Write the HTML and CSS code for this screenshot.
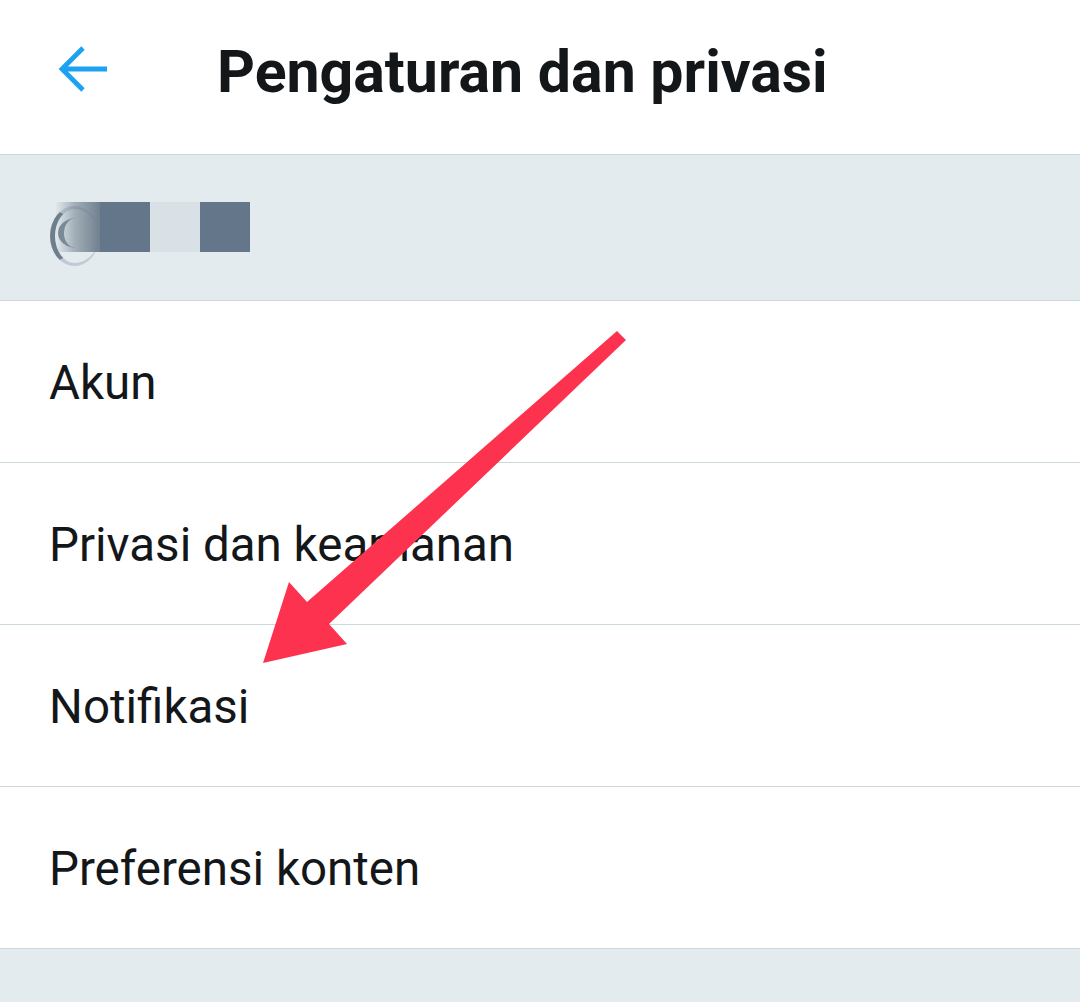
FILE: index.html
```html
<!DOCTYPE html>
<html lang="id">
<head>
    <meta charset="UTF-8">
    <meta name="viewport" content="width=device-width, initial-scale=1">
    <title>Pengaturan dan privasi</title>
    <link rel="stylesheet" href="styles.css">
</head>
<body>
<div class="screen">
    <div class="top_bar">
        <div class="back_button">
            <svg width="56" height="56" viewBox="0 0 56 56">
                <path d="M52 27 H7 M28 6 L7 27 L28 48" fill="none" stroke="#1da1f2" stroke-width="4.8"/>
            </svg>
        </div>
        <div class="top_title">Pengaturan dan privasi</div>
    </div>

    <div class="account_box">
        <div class="handle_blur">
            <div class="px px_fade"></div>
            <div class="px px_dark"></div>
            <div class="px px_light"></div>
            <div class="px px_dark"></div>
        </div>
    </div>

    <div class="menu_item">Akun</div>
    <div class="menu_item">Privasi dan keamanan</div>
    <div class="menu_item">Notifikasi</div>
    <div class="menu_item">Preferensi konten</div>

    <div class="bottom_fill"></div>

    <svg class="pointer_arrow" width="1080" height="1002" viewBox="0 0 1080 1002">
        <polygon points="617,331 626,340 329,624 347,644 263,663 289,582 307,602" fill="#fd324f"/>
    </svg>
</div>
</body>
</html>
```

FILE: styles.css
```css
* {
    box-sizing: border-box;
    font-family: Roboto, "Liberation Sans", sans-serif;
}

body {
    margin: 0;
    background: white;
    color: #14171a;
}

.screen {
    position: relative;
    width: 1080px;
    height: 1002px;
    display: flex;
    flex-direction: column;
    overflow: hidden;
}

.top_bar {
    height: 155px;
    display: flex;
    align-items: center;
    padding: 0 0 10px 55px;
    border-bottom: 1px solid #ccd6dd;
}

.back_button {
    width: 56px;
    height: 56px;
    margin-right: 106px;
    margin-top: -4px;
}

.back_button svg {
    display: block;
}

.top_title {
    font-size: 59px;
    font-weight: bold;
    margin-top: -2px;
}

.account_box {
    height: 146px;
    background: #e4ebef;
    border-bottom: 1px solid #ccd6dd;
    display: flex;
    align-items: center;
    padding-left: 50px;
}

.handle_blur {
    display: flex;
    margin-top: -2px;
}

.px {
    width: 50px;
    height: 50px;
}

.px_dark {
    background: #64778a;
}

.px_light {
    background: #d9e1e6;
}

.px_fade {
    position: relative;
    background: linear-gradient(to right, rgba(116, 133, 146, 0) 10%, rgba(116, 133, 146, 0.6) 50%, #71818f 100%);
}

.px_fade::before {
    content: "";
    position: absolute;
    left: 0;
    top: 4px;
    width: 44px;
    height: 54px;
    border-radius: 50%;
    border-left: 5px solid #6d7f8d;
    border-top: 3px solid rgba(109, 127, 141, 0.3);
    border-bottom: 3px solid rgba(109, 127, 141, 0.3);
}

.px_fade::after {
    content: "";
    position: absolute;
    left: 8px;
    top: 16px;
    width: 30px;
    height: 30px;
    border-radius: 50%;
    border-left: 6px solid #7a8a96;
}

.menu_item {
    height: 162px;
    border-bottom: 1px solid #ccd6dd;
    display: flex;
    align-items: center;
    padding: 3px 0 0 49px;
    font-size: 47.5px;
}

.bottom_fill {
    flex: 1;
    background: #e4ebef;
}

.pointer_arrow {
    position: absolute;
    left: 0;
    top: 0;
}
```
